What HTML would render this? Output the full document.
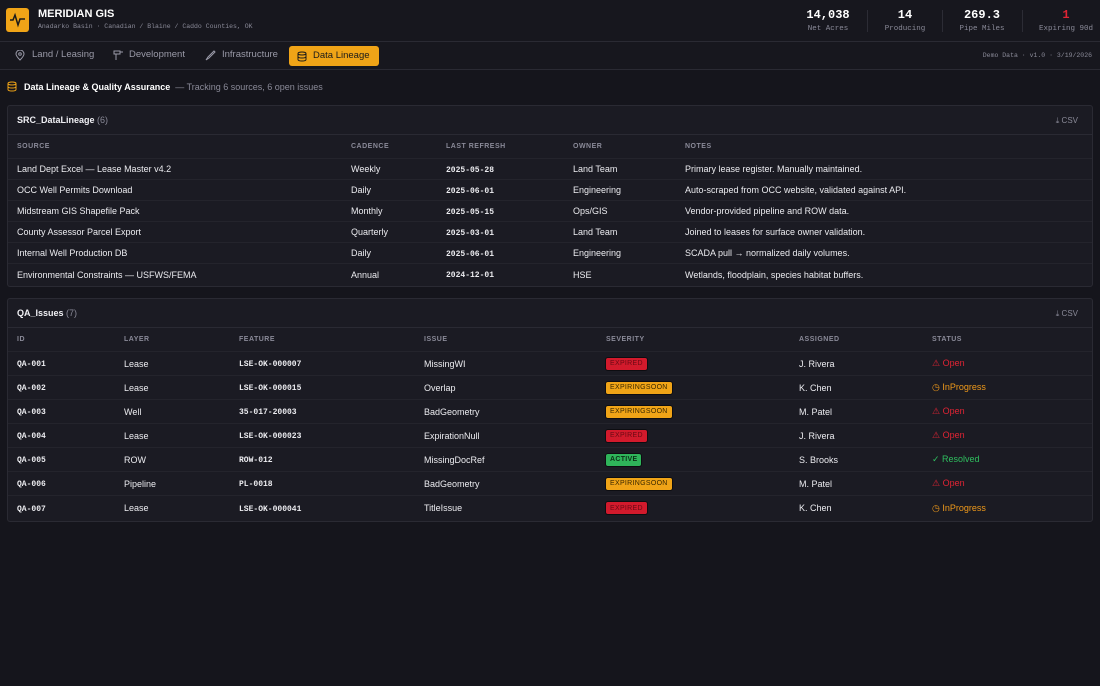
<!DOCTYPE html>
<html><head><meta charset="utf-8"><style>
*{box-sizing:border-box;margin:0;padding:0}
body{width:1100px;height:686px;background:#15151c;font-family:"Liberation Sans",sans-serif;color:#e6e6ea;position:relative;overflow:hidden;font-size:9px}
.mono{font-family:"Liberation Mono",monospace}
.abs{position:absolute}
.hdr{position:absolute;left:0;top:0;width:1100px;height:42px;background:#17171e;border-bottom:1px solid #2a2a33}
.nav{position:absolute;left:0;top:42px;width:1100px;height:28px;background:#17171e;border-bottom:1px solid #2a2a33}
.logo{position:absolute;left:6px;top:8px;width:23px;height:24px;background:#f0a417;border-radius:3px}
.stat{position:absolute;top:8px;text-align:center;width:70px}
.stat b{display:block;font-family:"Liberation Mono",monospace;font-size:12px;color:#fff}
.stat span{display:block;font-family:"Liberation Mono",monospace;font-size:7.5px;color:#8a8a98;margin-top:3px}
.sep{position:absolute;top:10px;width:1px;height:22px;background:#2c2c35}
.tab{position:absolute;top:46px;height:20px;line-height:20px;font-size:9.5px;color:#9a9aa8;padding-left:20px}
.tab.on{background:#f0a417;color:#1a1a1a;border-radius:3px;padding:0 9px 0 24px}
.panel{position:absolute;left:7px;width:1086px;background:#1b1b23;border:1px solid #2a2a33;border-radius:3px}
.ph{height:29px;border-bottom:1px solid #2a2a33;position:relative}
.ph .t{position:absolute;left:9px;top:9px;font-size:9px;font-weight:bold;color:#f0f0f4}
.ph .t span{font-weight:normal;color:#8a8a98}
.ph .csv{position:absolute;right:14px;top:10px;font-size:8px;color:#8a8a98}
.row{position:absolute;left:0;width:1084px;border-bottom:1px solid #24242c}
.row>div{position:absolute;top:0;height:100%;display:flex;align-items:center}
.th{color:#8a8a98;font-size:7px;font-weight:bold;letter-spacing:.5px}
.cell{font-size:9px;color:#ececf0}
.mono8{font-family:"Liberation Mono",monospace;font-size:8px;font-weight:bold;padding-top:2px}
.badge{font-size:7px;height:12px;padding:0 4px;border-radius:2px;letter-spacing:.3px;display:inline-flex;align-items:center;box-shadow:0 0 0 1px rgba(0,0,0,.5)}
.exp{background:#d21a2c;color:#6a0a14}
.soon{background:#f0a417;color:#3a2800}
.act{background:#2fb45a;color:#0c3018;font-weight:bold}
.open{color:#e02434}.prog{color:#f09a1a}.res{color:#2fbf5f}
</style></head><body>
<div class="hdr">
 <div class="logo"><svg width="23" height="24" viewBox="0 0 23 24"><path d="M4 12h3l2-5 3 10 2-6h5" fill="none" stroke="#1a1a1a" stroke-width="1.5"/></svg></div>
 <div class="abs" style="left:38px;top:8px;font-size:11px;font-weight:bold;color:#fff">MERIDIAN GIS</div>
 <div class="abs mono" style="left:38px;top:23px;font-size:6.5px;color:#8a8a98">Anadarko Basin · Canadian / Blaine / Caddo Counties, OK</div>
 <div class="stat" style="left:793px"><b>14,038</b><span>Net Acres</span></div>
 <div class="sep" style="left:867px"></div>
 <div class="stat" style="left:870px"><b>14</b><span>Producing</span></div>
 <div class="sep" style="left:942px"></div>
 <div class="stat" style="left:947px"><b>269.3</b><span>Pipe Miles</span></div>
 <div class="sep" style="left:1022px"></div>
 <div class="stat" style="left:1031px"><b style="color:#e02434">1</b><span>Expiring 90d</span></div>
</div>
<div class="nav"></div>
<div class="tab" style="left:12px;top:45px"><svg class="abs" style="left:3px;top:5px" width="10" height="11" viewBox="0 0 10 11"><path d="M5 10C2 7 1 5.5 1 4a4 4 0 018 0c0 1.5-1 3-4 6z" fill="none" stroke="#9a9aa8"/><circle cx="5" cy="4" r="1.3" fill="none" stroke="#9a9aa8"/></svg>Land / Leasing</div>
<div class="tab" style="left:109px;top:45px"><svg class="abs" style="left:4px;top:5px" width="11" height="11" viewBox="0 0 11 11"><path d="M1 1h6v3H1zM3 4v6M7 2h3" fill="none" stroke="#9a9aa8"/></svg>Development</div>
<div class="tab" style="left:202px;top:45px"><svg class="abs" style="left:3px;top:5px" width="11" height="11" viewBox="0 0 11 11"><path d="M1 10l2-3 6-6 1 1-6 6z" fill="none" stroke="#9a9aa8"/></svg>Infrastructure</div>
<div class="tab on" style="left:289px"><svg class="abs" style="left:8px;top:5px" width="10" height="11" viewBox="0 0 10 11"><ellipse cx="5" cy="2.5" rx="4" ry="1.5" fill="none" stroke="#1a1a1a"/><path d="M1 2.5v6c0 1 2 1.5 4 1.5s4-.5 4-1.5v-6M1 5.5c0 1 2 1.5 4 1.5s4-.5 4-1.5" fill="none" stroke="#1a1a1a"/></svg>Data Lineage</div>
<div class="abs mono" style="right:8px;top:52px;font-size:6.5px;color:#8a8a98">Demo Data · v1.0 · 3/19/2026</div>

<svg class="abs" style="left:7px;top:81px" width="10" height="11" viewBox="0 0 10 11"><ellipse cx="5" cy="2.5" rx="4" ry="1.5" fill="none" stroke="#f0a417"/><path d="M1 2.5v6c0 1 2 1.5 4 1.5s4-.5 4-1.5v-6M1 5.5c0 1 2 1.5 4 1.5s4-.5 4-1.5" fill="none" stroke="#f0a417"/></svg>
<div class="abs" style="left:24px;top:82px;font-size:9px"><b style="color:#fff">Data Lineage &amp; Quality Assurance</b> <span style="color:#8a8a98">&nbsp;— Tracking 6 sources, 6 open issues</span></div>

<div class="panel" style="top:105px;height:182px">
 <div class="ph"><div class="t">SRC_DataLineage <span>(6)</span></div><div class="csv">⤓ CSV</div></div>
 <div class="row th" style="top:29px;height:24px"><div style="left:9px">SOURCE</div><div style="left:343px">CADENCE</div><div style="left:438px">LAST REFRESH</div><div style="left:565px">OWNER</div><div style="left:677px">NOTES</div></div>
 <div class="row cell" style="top:53px;height:21px"><div style="left:9px">Land Dept Excel — Lease Master v4.2</div><div style="left:343px">Weekly</div><div class="mono8" style="left:438px">2025-05-28</div><div style="left:565px">Land Team</div><div style="left:677px">Primary lease register. Manually maintained.</div></div>
 <div class="row cell" style="top:74px;height:21px"><div style="left:9px">OCC Well Permits Download</div><div style="left:343px">Daily</div><div class="mono8" style="left:438px">2025-06-01</div><div style="left:565px">Engineering</div><div style="left:677px">Auto-scraped from OCC website, validated against API.</div></div>
 <div class="row cell" style="top:95px;height:21px"><div style="left:9px">Midstream GIS Shapefile Pack</div><div style="left:343px">Monthly</div><div class="mono8" style="left:438px">2025-05-15</div><div style="left:565px">Ops/GIS</div><div style="left:677px">Vendor-provided pipeline and ROW data.</div></div>
 <div class="row cell" style="top:116px;height:21px"><div style="left:9px">County Assessor Parcel Export</div><div style="left:343px">Quarterly</div><div class="mono8" style="left:438px">2025-03-01</div><div style="left:565px">Land Team</div><div style="left:677px">Joined to leases for surface owner validation.</div></div>
 <div class="row cell" style="top:137px;height:21px"><div style="left:9px">Internal Well Production DB</div><div style="left:343px">Daily</div><div class="mono8" style="left:438px">2025-06-01</div><div style="left:565px">Engineering</div><div style="left:677px">SCADA pull → normalized daily volumes.</div></div>
 <div class="row cell" style="top:158px;height:21px;border:0"><div style="left:9px">Environmental Constraints — USFWS/FEMA</div><div style="left:343px">Annual</div><div class="mono8" style="left:438px">2024-12-01</div><div style="left:565px">HSE</div><div style="left:677px">Wetlands, floodplain, species habitat buffers.</div></div>
</div>

<div class="panel" style="top:298px;height:224px">
 <div class="ph"><div class="t">QA_Issues <span>(7)</span></div><div class="csv">⤓ CSV</div></div>
 <div class="row th" style="top:29px;height:24px"><div style="left:9px">ID</div><div style="left:116px">LAYER</div><div style="left:231px">FEATURE</div><div style="left:416px">ISSUE</div><div style="left:598px">SEVERITY</div><div style="left:791px">ASSIGNED</div><div style="left:924px">STATUS</div></div>
 <div class="row cell" style="top:53px;height:24px"><div class="mono8" style="left:9px">QA-001</div><div style="left:116px">Lease</div><div class="mono8" style="left:231px">LSE-OK-000007</div><div style="left:416px">MissingWI</div><div style="left:598px"><span class="badge exp">EXPIRED</span></div><div style="left:791px">J. Rivera</div><div class="open" style="left:924px">⚠ Open</div></div>
 <div class="row cell" style="top:77px;height:24px"><div class="mono8" style="left:9px">QA-002</div><div style="left:116px">Lease</div><div class="mono8" style="left:231px">LSE-OK-000015</div><div style="left:416px">Overlap</div><div style="left:598px"><span class="badge soon">EXPIRINGSOON</span></div><div style="left:791px">K. Chen</div><div class="prog" style="left:924px">◷ InProgress</div></div>
 <div class="row cell" style="top:101px;height:24px"><div class="mono8" style="left:9px">QA-003</div><div style="left:116px">Well</div><div class="mono8" style="left:231px">35-017-20003</div><div style="left:416px">BadGeometry</div><div style="left:598px"><span class="badge soon">EXPIRINGSOON</span></div><div style="left:791px">M. Patel</div><div class="open" style="left:924px">⚠ Open</div></div>
 <div class="row cell" style="top:125px;height:24px"><div class="mono8" style="left:9px">QA-004</div><div style="left:116px">Lease</div><div class="mono8" style="left:231px">LSE-OK-000023</div><div style="left:416px">ExpirationNull</div><div style="left:598px"><span class="badge exp">EXPIRED</span></div><div style="left:791px">J. Rivera</div><div class="open" style="left:924px">⚠ Open</div></div>
 <div class="row cell" style="top:149px;height:24px"><div class="mono8" style="left:9px">QA-005</div><div style="left:116px">ROW</div><div class="mono8" style="left:231px">ROW-012</div><div style="left:416px">MissingDocRef</div><div style="left:598px"><span class="badge act">ACTIVE</span></div><div style="left:791px">S. Brooks</div><div class="res" style="left:924px">✓ Resolved</div></div>
 <div class="row cell" style="top:173px;height:24px"><div class="mono8" style="left:9px">QA-006</div><div style="left:116px">Pipeline</div><div class="mono8" style="left:231px">PL-0018</div><div style="left:416px">BadGeometry</div><div style="left:598px"><span class="badge soon">EXPIRINGSOON</span></div><div style="left:791px">M. Patel</div><div class="open" style="left:924px">⚠ Open</div></div>
 <div class="row cell" style="top:197px;height:24px;border:0"><div class="mono8" style="left:9px">QA-007</div><div style="left:116px">Lease</div><div class="mono8" style="left:231px">LSE-OK-000041</div><div style="left:416px">TitleIssue</div><div style="left:598px"><span class="badge exp">EXPIRED</span></div><div style="left:791px">K. Chen</div><div class="prog" style="left:924px">◷ InProgress</div></div>
</div>
</body></html>
